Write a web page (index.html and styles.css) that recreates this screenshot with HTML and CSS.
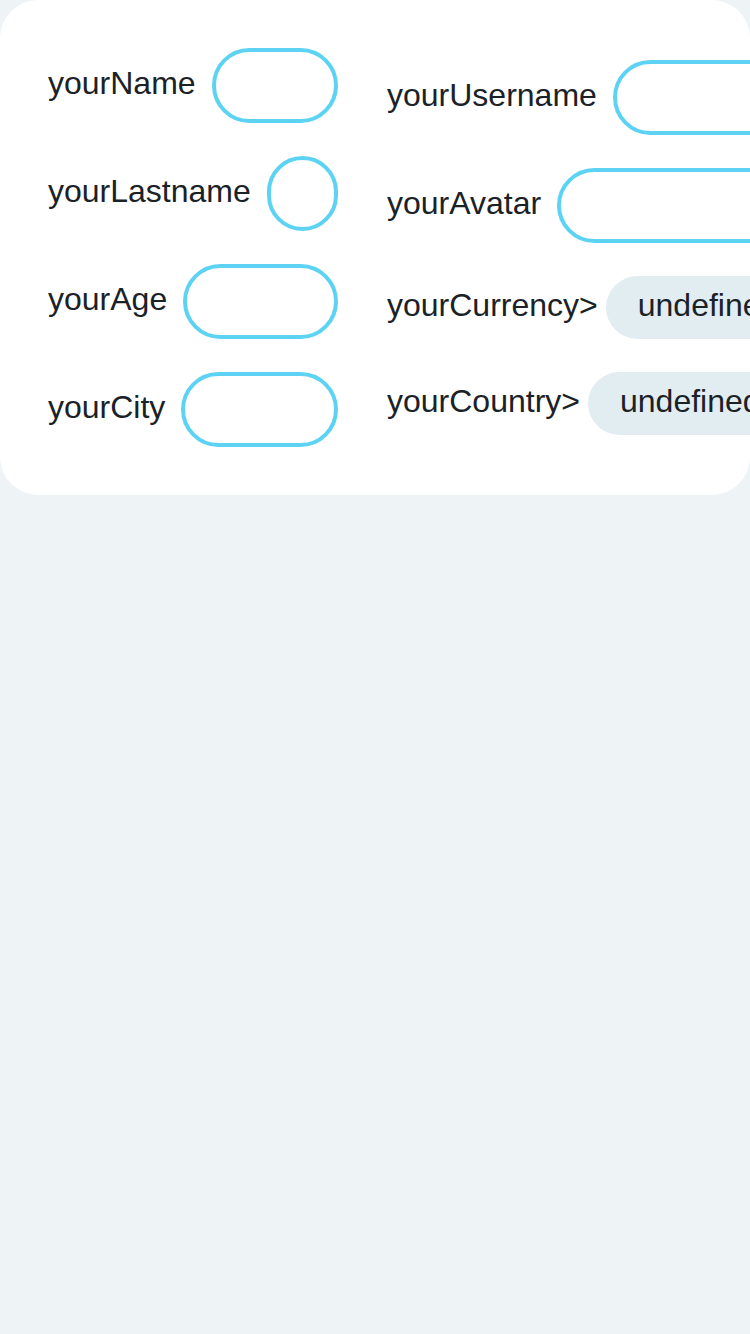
FILE: index.html
```html
<!DOCTYPE html>
<html lang="en">
<head>
<meta charset="utf-8">
<title>Profile form</title>
<link rel="stylesheet" href="styles.css">
</head>
<body>
  <div class="card">
    <div class="col col-left">
      <div class="row"><span class="label">yourName</span><input class="field" type="text"></div>
      <div class="row"><span class="label">yourLastname</span><input class="field" type="text"></div>
      <div class="row"><span class="label">yourAge</span><input class="field" type="text"></div>
      <div class="row"><span class="label">yourCity</span><input class="field" type="text"></div>
    </div>
    <div class="col col-right">
      <div class="row"><span class="label">yourUsername</span><input class="field" type="text"></div>
      <div class="row"><span class="label">yourAvatar</span><input class="field" type="text"></div>
      <div class="row row-chip"><span class="label">yourCurrency&gt;</span><span class="chip">undefined</span></div>
      <div class="row row-chip"><span class="label">yourCountry&gt;</span><span class="chip">undefined</span></div>
    </div>
  </div>
</body>
</html>
```
FILE: styles.css
```css
html, body {
  margin: 0;
  padding: 0;
}
body {
  width: 750px;
  height: 1334px;
  background: #eef3f6;
  overflow: hidden;
  font-family: "Liberation Sans", Arial, sans-serif;
  color: #1b2227;
}
.card {
  box-sizing: border-box;
  width: 750px;
  height: 495px;
  background: #ffffff;
  border-radius: 38px;
  padding: 48px;
  display: flex;
  align-items: center;
  gap: 49px;
  overflow: hidden;
}
.col {
  display: flex;
  flex-direction: column;
  gap: 33px;
  flex-shrink: 0;
}
.col-left {
  width: 290px;
}
.col-right {
  width: 460px;
}
.row {
  display: flex;
  align-items: center;
  gap: 16px;
  height: 75px;
}
.row-chip {
  height: 63px;
  gap: 8px;
}
.label {
  font-size: 32px;
  line-height: 37px;
  margin-bottom: 4px;
  white-space: nowrap;
  flex-shrink: 0;
}
.field {
  flex: 1;
  min-width: 0;
  width: 10px;
  box-sizing: border-box;
  height: 75px;
  border: 4px solid #5dd3f3;
  border-radius: 999px;
  background: #ffffff;
  outline: none;
  padding: 0 24px;
  font-family: inherit;
  font-size: 32px;
}
.chip {
  box-sizing: border-box;
  height: 63px;
  display: flex;
  align-items: center;
  padding: 0 32px 4px;
  background: #e2edf1;
  border-radius: 999px;
  font-size: 32px;
  line-height: 37px;
  white-space: nowrap;
  flex-shrink: 0;
}
```
